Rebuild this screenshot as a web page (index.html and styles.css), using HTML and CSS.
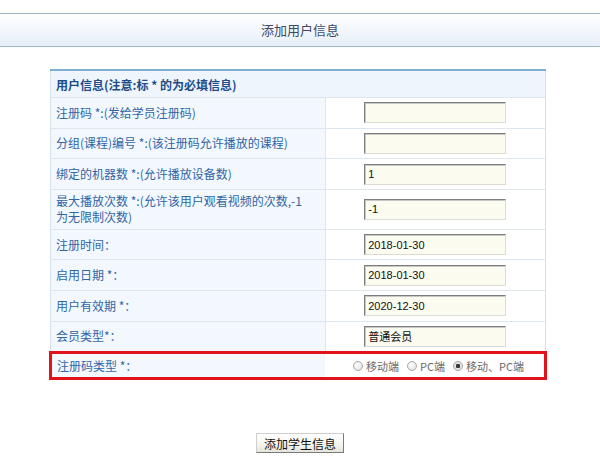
FILE: index.html
```html
<!DOCTYPE html>
<html lang="zh-CN">
<head>
<meta charset="utf-8">
<title>添加用户信息</title>
<link rel="stylesheet" href="styles.css">
</head>
<body>
<div class="page-title">添加用户信息</div>
<table class="form-table">
  <tr class="head-row"><th colspan="2">用户信息(注意:标 * 的为必填信息)</th></tr>
  <tr><td class="label">注册码 *:(发给学员注册码)</td><td class="field"><input class="txt" type="text" value=""></td></tr>
  <tr><td class="label">分组(课程)编号 *:(该注册码允许播放的课程)</td><td class="field"><input class="txt" type="text" value=""></td></tr>
  <tr><td class="label">绑定的机器数 *:(允许播放设备数)</td><td class="field"><input class="txt" type="text" value="1"></td></tr>
  <tr class="tall"><td class="label">最大播放次数 *:(允许该用户观看视频的次数,-1<br>为无限制次数)</td><td class="field"><input class="txt" type="text" value="-1"></td></tr>
  <tr><td class="label">注册时间：</td><td class="field"><input class="txt" type="text" value="2018-01-30"></td></tr>
  <tr><td class="label">启用日期 *：</td><td class="field"><input class="txt" type="text" value="2018-01-30"></td></tr>
  <tr><td class="label">用户有效期 *：</td><td class="field"><input class="txt" type="text" value="2020-12-30"></td></tr>
  <tr><td class="label">会员类型*：</td><td class="field"><input class="txt" type="text" value="普通会员"></td></tr>
  <tr class="marked"><td class="label">注册码类型 *：</td><td class="field">
    <div class="radios">
      <span class="opt"><span class="radio"></span>移动端</span>
      <span class="opt"><span class="radio"></span>PC端</span>
      <span class="opt"><span class="radio on"></span>移动、PC端</span>
    </div>
  </td></tr>
</table>
<div class="actions"><button class="btn" type="button">添加学生信息</button></div>
</body>
</html>
```

FILE: styles.css
```css
html, body {
  margin: 0;
  padding: 0;
  background: #ffffff;
  font-family: "Noto Sans CJK SC", "Noto Sans", sans-serif;
  font-size: 12px;
}

.page-title {
  margin-top: 13px;
  height: 32px;
  line-height: 31px;
  text-align: center;
  font-size: 13px;
  color: #3d4a68;
  border-top: 1px solid #9db8c3;
  border-bottom: 1px solid #9db8c3;
  background: linear-gradient(to bottom, #ffffff 0%, #f3f7fc 50%, #e6eef8 100%);
}

.form-table {
  margin: 22px 0 0 49px;
  width: 498px;
  border-collapse: collapse;
  border-left: 1px solid #d6e0ea;
  border-right: 1px solid #d6e0ea;
}

.head-row th {
  height: 26px;
  padding: 0 5px;
  text-align: left;
  font-weight: bold;
  font-size: 12px;
  color: #1d4c88;
  background: #eef5fd;
  border-top: 2px solid #7eafd2;
  border-bottom: 1px solid #dde5ee;
}

.form-table td {
  height: 29.6px;
  padding: 0;
  border-bottom: 1px solid #dde5ee;
}

.form-table tr.tall td { height: 39px; }

.label {
  width: 268px;
  padding: 0 0 0 5px !important;
  color: #3065a6;
  line-height: 16px;
  background: #f3f8fe;
  border-right: 1px solid #dde5ee;
}

.field {
  text-align: center;
  background: #ffffff;
}

.txt {
  box-sizing: border-box;
  width: 142px;
  height: 21px;
  margin: 0;
  padding: 0 3px;
  vertical-align: middle;
  font-family: "Liberation Sans", "Noto Sans CJK SC", sans-serif;
  font-size: 11px;
  color: #111;
  background: #fbfbf0;
  border: 1px solid;
  border-color: #7d7d7d #dcdcd4 #dcdcd4 #7d7d7d;
  box-shadow: inset 1px 1px 0 #c8c8c8;
  outline: none;
}

.form-table tr.marked td {
  height: 23px;
  border-top: 3px solid #e0121c;
  border-bottom: 3px solid #e0121c;
}
.form-table tr.marked td.label {
  border-left: 3px solid #e0121c;
  border-right: none;
}
.form-table tr.marked td.field {
  border-right: 3px solid #e0121c;
}

.radios {
  display: flex;
  justify-content: center;
  align-items: center;
  gap: 8px;
  padding-left: 8px;
  font-size: 11px;
  color: #6a6a6a;
}
.opt {
  display: inline-flex;
  align-items: center;
  gap: 3px;
}
.radio {
  display: inline-block;
  box-sizing: border-box;
  width: 10px;
  height: 10px;
  border-radius: 50%;
  border: 1px solid #a8a8a8;
  background: radial-gradient(circle at 35% 35%, #ffffff 0%, #dcdcdc 100%);
}
.radio.on {
  background: radial-gradient(circle, #3a3a3a 0 2px, #e8e8e8 2.5px, #d0d0d0 100%);
}

.actions {
  margin-top: 53px;
  text-align: center;
}
.btn {
  box-sizing: border-box;
  width: 88px;
  height: 20px;
  padding: 0;
  font-family: "Noto Sans CJK SC", sans-serif;
  font-size: 12px;
  color: #111;
  background: linear-gradient(to bottom, #ffffff 0%, #f4f4ee 60%, #e4e4dc 100%);
  border: 1px solid;
  border-color: #cfcfcf #7a7a7a #7a7a7a #cfcfcf;
  border-radius: 0;
}
```
